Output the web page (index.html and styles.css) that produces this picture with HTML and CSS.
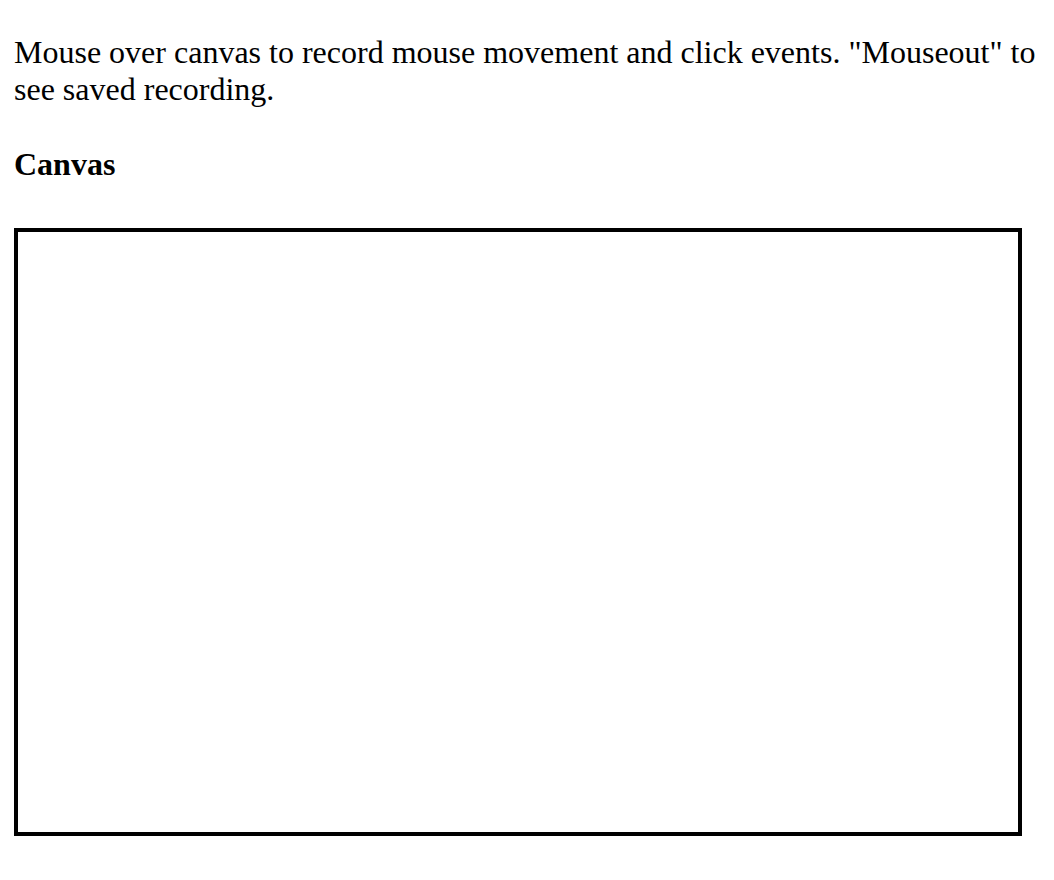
FILE: index.html
```html
<!DOCTYPE html>
<html>
<head>
<meta charset="utf-8">
<title>Canvas recorder</title>
<link rel="stylesheet" href="styles.css">
</head>
<body>
<p class="intro">Mouse over canvas to record mouse movement and click events. "Mouseout" to see saved recording.</p>
<h3 class="title">Canvas</h3>
<canvas class="board" width="1000" height="600"></canvas>
</body>
</html>
```
FILE: styles.css
```css
html, body {
  margin: 0;
  padding: 0;
  background: #fff;
}
body {
  padding: 0 14px;
  font-family: "Liberation Serif", "Times New Roman", serif;
  color: #000;
}
.intro {
  margin: 0;
  padding-top: 34px;
  font-size: 32px;
  line-height: 37px;
}
.title {
  margin: 37.7px 0 0 0;
  font-size: 32px;
  line-height: 37px;
  font-weight: bold;
}
.board {
  display: block;
  margin-top: 45.3px;
  width: 1000px;
  height: 600px;
  border: 4px solid #000;
  background: #fff;
}
```
